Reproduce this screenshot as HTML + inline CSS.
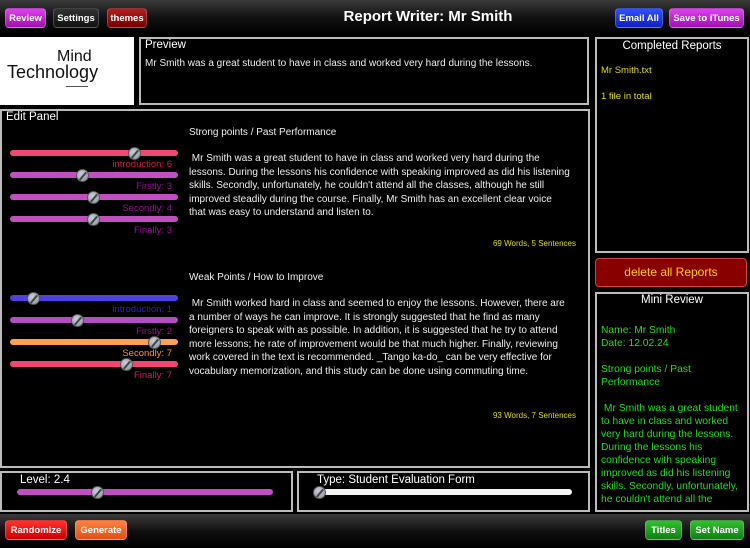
<!DOCTYPE html>
<html><head><meta charset="utf-8"><style>
*{margin:0;padding:0;box-sizing:border-box}
body{width:750px;height:548px;background:#000;position:relative;overflow:hidden;font-family:"Liberation Sans",sans-serif;color:#fff}
.a{position:absolute}
.bar{position:absolute;left:0;width:750px;background:linear-gradient(#3a3a3a,#111 50%,#000)}
.btn{position:absolute;height:20px;border-radius:4px;font-size:9.5px;font-weight:bold;color:#fff;text-align:center;line-height:20px;border:1px solid rgba(255,255,255,.2)}
.box{position:absolute;border:2px solid #bbb;background:#000}
.tr{position:absolute;height:6px;border-radius:3px}
.th{position:absolute;width:13px;height:13px;border-radius:50%;background:radial-gradient(circle at 40% 35%,#c8ccd4,#8a90a0);border:1px solid #555}
.th:after{content:"";position:absolute;left:5px;top:1px;width:1.5px;height:10px;background:#444;transform:rotate(40deg)}
.lb{position:absolute;right:0;width:172px;text-align:right;font-size:9.5px}
.p{font-size:10px;line-height:13.5px;color:#eee;white-space:pre}
</style></head><body>
<div class="bar" style="top:0;height:35px"></div>
<div class="btn" style="left:5px;top:8px;width:41px;background:linear-gradient(#e040f0,#a010b0)">Review</div>
<div class="btn" style="left:53px;top:8px;width:46px;background:linear-gradient(#333,#111)">Settings</div>
<div class="btn" style="left:107px;top:8px;width:40px;background:linear-gradient(#b02020,#700)">themes</div>
<div class="a" style="left:0;width:856px;top:8px;text-align:center;font-size:15px;font-weight:bold">Report Writer: Mr Smith</div>
<div class="btn" style="left:615px;top:8px;width:48px;background:linear-gradient(#3050ff,#1020c0)">Email All</div>
<div class="btn" style="left:669px;top:8px;width:75px;background:linear-gradient(#e040f0,#a010b0)">Save to iTunes</div>

<div class="a" style="left:0;top:37px;width:134px;height:68px;background:#fff"></div>
<div class="a" style="left:57px;top:48px;font-size:16px;line-height:18px;color:#111">Mind</div>
<div class="a" style="left:7px;top:62px;font-size:18px;line-height:20px;color:#111">Technology</div>
<div class="a" style="left:66px;top:86px;width:22px;height:1px;background:#555"></div>

<div class="box" style="left:139px;top:37px;width:450px;height:68px"></div>
<div class="a" style="left:145px;top:39px;font-size:11.5px">Preview</div>
<div class="a p" style="left:145px;top:57px">Mr Smith was a great student to have in class and worked very hard during the lessons.</div>

<div class="box" style="left:0;top:109px;width:590px;height:359px"></div>
<div class="a" style="left:6px;top:111px;font-size:11.5px">Edit Panel</div>

<div class="a p" style="left:189px;top:126px">Strong points / Past Performance</div>
<div class="a p" style="left:189px;top:152px"> Mr Smith was a great student to have in class and worked very hard during the
lessons. During the lessons his confidence with speaking improved as did his listening
skills. Secondly, unfortunately, he couldn't attend all the classes, although he still
improved steadily during the course. Finally, Mr Smith has an excellent clear voice
that was easy to understand and listen to.</div>
<div class="a" style="left:400px;width:176px;top:239px;text-align:right;font-size:8px;color:#dd0">69 Words, 5 Sentences</div>

<div class="a p" style="left:189px;top:271px">Weak Points / How to Improve</div>
<div class="a p" style="left:189px;top:297px"> Mr Smith worked hard in class and seemed to enjoy the lessons. However, there are
a number of ways he can improve. It is strongly suggested that he find as many
foreigners to speak with as possible. In addition, it is suggested that he try to attend
more lessons; he rate of improvement would be that much higher. Finally, reviewing
work covered in the text is recommended. _Tango ka-do_ can be very effective for
vocabulary memorization, and this study can be done using commuting time.</div>
<div class="a" style="left:400px;width:176px;top:411px;text-align:right;font-size:8px;color:#dd0">93 Words, 7 Sentences</div>

<div class="tr" style="left:10px;top:150px;width:168px;background:#f04870"></div><div class="th" style="left:128px;top:147px"></div>
<div class="lb" style="left:0;width:172px;top:159px;color:#d02040">introduction: 6</div>
<div class="tr" style="left:10px;top:172px;width:168px;background:#c050c0"></div><div class="th" style="left:76px;top:169px"></div>
<div class="lb" style="left:0;width:172px;top:181px;color:#9a1090">Firstly: 3</div>
<div class="tr" style="left:10px;top:194px;width:168px;background:#c050c0"></div><div class="th" style="left:87px;top:191px"></div>
<div class="lb" style="left:0;width:172px;top:203px;color:#9a1090">Secondly: 4</div>
<div class="tr" style="left:10px;top:216px;width:168px;background:#c050c0"></div><div class="th" style="left:87px;top:213px"></div>
<div class="lb" style="left:0;width:172px;top:225px;color:#9a1090">Finally: 3</div>

<div class="tr" style="left:10px;top:295px;width:168px;background:#5040e0"></div><div class="th" style="left:27px;top:292px"></div>
<div class="lb" style="left:0;width:172px;top:304px;color:#3020c0">introduction: 1</div>
<div class="tr" style="left:10px;top:317px;width:168px;background:#b050c0"></div><div class="th" style="left:71px;top:314px"></div>
<div class="lb" style="left:0;width:172px;top:326px;color:#9a1090">Firstly: 2</div>
<div class="tr" style="left:10px;top:339px;width:168px;background:#ffa050"></div><div class="th" style="left:148px;top:336px"></div>
<div class="lb" style="left:0;width:172px;top:348px;color:#ff9030">Secondly: 7</div>
<div class="tr" style="left:10px;top:361px;width:168px;background:#f04870"></div><div class="th" style="left:120px;top:358px"></div>
<div class="lb" style="left:0;width:172px;top:370px;color:#d02050">Finally: 7</div>

<div class="box" style="left:0;top:471px;width:293px;height:41px"></div>
<div class="a" style="left:20px;top:474px;font-size:11.5px">Level: 2.4</div>
<div class="tr" style="left:17px;top:489px;width:256px;background:#c050c0"></div><div class="th" style="left:91px;top:486px"></div>
<div class="box" style="left:297px;top:471px;width:293px;height:41px"></div>
<div class="a" style="left:317px;top:474px;font-size:11.5px">Type: Student Evaluation Form</div>
<div class="tr" style="left:316px;top:489px;width:256px;background:#f4f4f4"></div><div class="th" style="left:313px;top:486px"></div>

<div class="box" style="left:595px;top:37px;width:154px;height:216px"></div>
<div class="a" style="left:595px;width:154px;top:40px;text-align:center;font-size:11.5px">Completed Reports</div>
<div class="a" style="left:601px;top:65px;font-size:9.5px;color:#dd0">Mr Smith.txt</div>
<div class="a" style="left:601px;top:91px;font-size:9.5px;color:#dd0">1 file in total</div>
<div class="a" style="left:595px;top:258px;width:152px;height:29px;background:#800;border:1px solid #c44;border-radius:4px;text-align:center;line-height:27px;font-size:12px;color:#fc0">delete all Reports</div>
<div class="box" style="left:595px;top:292px;width:154px;height:220px"></div>
<div class="a" style="left:595px;width:154px;top:294px;text-align:center;font-size:11.5px">Mini Review</div>
<div class="a" style="left:601px;top:324px;font-size:10.3px;line-height:13px;color:#2d2;white-space:pre">Name: Mr Smith
Date: 12.02.24

Strong points / Past
Performance

 Mr Smith was a great student
to have in class and worked
very hard during the lessons.
During the lessons his
confidence with speaking
improved as did his listening
skills. Secondly, unfortunately,
he couldn't attend all the</div>

<div class="bar" style="top:514px;height:34px"></div>
<div class="btn" style="left:5px;top:520px;width:62px;background:linear-gradient(#ff3030,#c00)">Randomize</div>
<div class="btn" style="left:75px;top:520px;width:52px;background:linear-gradient(#ff8040,#e05010)">Generate</div>
<div class="btn" style="left:645px;top:520px;width:37px;background:linear-gradient(#30c030,#108010)">Titles</div>
<div class="btn" style="left:690px;top:520px;width:54px;background:linear-gradient(#30c030,#108010)">Set Name</div>
</body></html>
